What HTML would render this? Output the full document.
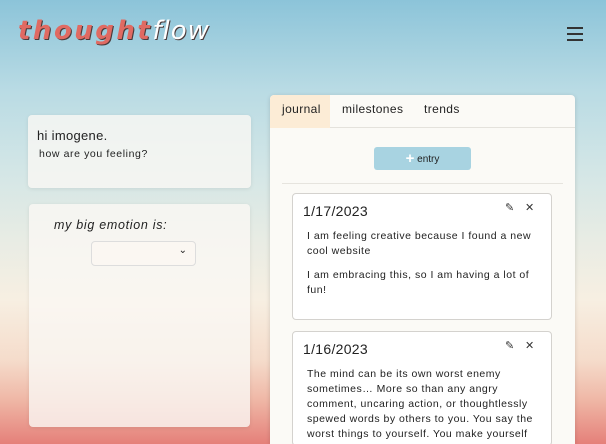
<!DOCTYPE html>
<html style="width:606px;height:444px;overflow:hidden"><head><style>
*{margin:0;padding:0;box-sizing:border-box}
html,body{width:606px;height:444px;overflow:hidden}
body{position:relative;font-family:"Liberation Sans",sans-serif;color:#222;
background:linear-gradient(to bottom,#8cc4d9 0px,#b9dbe4 90px,#d3e6e6 170px,#e8ece4 240px,#f7efe2 300px,#f5dccb 360px,#efb7a6 400px,#e5807a 444px) no-repeat;}
.logo{position:absolute;left:18px;top:16px;font-size:26px;font-style:italic;font-weight:bold;letter-spacing:2.5px;text-shadow:1px 1px 0 #4a3a3a;font-family:"DejaVu Sans",sans-serif}
.logo .a{color:#e06a62}.logo .b{color:#fff;letter-spacing:1px;font-weight:normal}
.burger{position:absolute;left:567px;top:27px;width:16px}
.burger i{display:block;height:2px;background:#333;margin-bottom:4px}
.card{position:absolute;background:rgba(250,248,244,.8);border-radius:4px;box-shadow:0 1px 4px rgba(0,0,0,.08)}
.panel{position:absolute;left:270px;top:95px;width:305px;height:349px;overflow:hidden;background:#fbfaf6;border-radius:4px 4px 0 0;box-shadow:0 1px 5px rgba(0,0,0,.15)}
.tabs{height:33px;border-bottom:1px solid #e4e2dc;font-size:12px;position:relative;letter-spacing:.4px}
.tabs span{position:absolute;top:7px}
.entry{position:absolute;left:22px;width:260px;border:1px solid #d4d2ce;border-radius:4px;background:#fff;font-size:10.5px;letter-spacing:.5px;overflow:hidden}
.entry .d{position:absolute;left:10px;top:9px;font-size:14px;letter-spacing:.3px}
.entry p{margin-left:14px;line-height:15px;width:236px}
.ic{position:absolute;top:7px;font-size:11px;color:#333}
</style></head><body>
<div class="logo"><span class="a">thought</span><span class="b">flow</span></div>
<div class="burger"><i></i><i></i><i></i></div>
<div class="card" style="left:28px;top:115px;width:223px;height:73px">
<div style="position:absolute;left:9px;top:13px;font-size:13px;letter-spacing:.3px">hi imogene.</div>
<div style="position:absolute;left:11px;top:33px;font-size:10.5px;letter-spacing:.6px">how are you feeling?</div>
</div>
<div class="card" style="left:29px;top:204px;width:221px;height:223px">
<div style="position:absolute;left:25px;top:14px;font-size:12.5px;font-style:italic;letter-spacing:.7px">my big emotion is:</div>
<div style="position:absolute;left:62px;top:37px;width:105px;height:25px;border:1px solid #ddd;border-radius:4px;background:#fbf7f2"><span style="position:absolute;right:8px;top:3px;font-size:10px">⌄</span></div>
</div>
<div class="panel">
<div class="tabs">
<div style="position:absolute;left:0;top:0;width:60px;height:33px;background:#fcecd6;border-radius:4px 0 0 0"></div>
<span style="left:12px">journal</span><span style="left:72px">milestones</span><span style="left:154px">trends</span>
</div>
<div style="position:absolute;left:104px;top:52px;width:97px;height:23px;background:#a8d3e1;border-radius:3px;font-size:10px;text-align:center;line-height:23px"><b style="color:#fff;font-size:15px;vertical-align:-1px">+</b> entry</div>
<div style="position:absolute;left:12px;right:12px;top:88px;border-top:1px solid #e6e4de"></div>
<div class="entry" style="top:98px;height:127px">
<div class="d">1/17/2023</div><span class="ic" style="left:212px">✎</span><span class="ic" style="left:232px">✕</span>
<p style="margin-top:35px">I am feeling creative because I found a new cool website</p>
<p style="margin-top:9px">I am embracing this, so I am having a lot of fun!</p>
</div>
<div class="entry" style="top:236px;height:115px">
<div class="d">1/16/2023</div><span class="ic" style="left:212px">✎</span><span class="ic" style="left:232px">✕</span>
<p style="margin-top:35px">The mind can be its own worst enemy sometimes… More so than any angry comment, uncaring action, or thoughtlessly spewed words by others to you. You say the worst things to yourself. You make yourself</p>
</div>
</div>
</body></html>
